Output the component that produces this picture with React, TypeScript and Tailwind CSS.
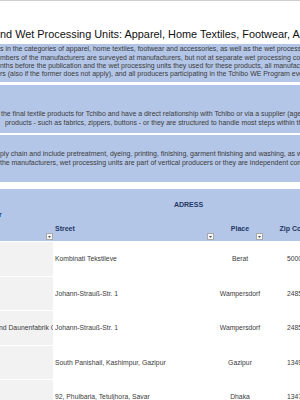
import React from 'react'

function FilterButton({ className }: { className: string }) {
  return (
    <span className={`absolute flex h-[7px] w-[7px] items-center justify-center border border-[#a9a9a9] bg-[#f4f4f4] ${className}`}>
      <svg width="3" height="2" viewBox="0 0 3 2">
        <path d="M0 0h3L1.5 2z" fill="#555" />
      </svg>
    </span>
  )
}

const intro = [
  's in the categories of apparel, home textiles, footwear and accessories, as well as the wet processing units',
  'mbers of the manufacturers are surveyed at manufacturers, but not at separate wet processing companies',
  'nths before the publication and the wet processing units they used for these products, all manufacturers',
  'rs (also if the former does not apply), and all producers participating in the Tchibo WE Program even',
]

const rows = [
  { name: '', street: 'Kombinati Tekstileve', place: 'Berat', zip: '5000' },
  { name: '', street: 'Johann-Strauß-Str. 1', place: 'Wampersdorf', zip: '2485' },
  { name: 'nd Daunenfabrik GmbH', street: 'Johann-Strauß-Str. 1', place: 'Wampersdorf', zip: '2485' },
  { name: '', street: 'South Panishail, Kashimpur, Gazipur', place: 'Gazipur', zip: '1349' },
  { name: '', street: '92, Phulbaria, Tetuljhora, Savar', place: 'Dhaka', zip: '1347' },
]

export default function App() {
  return (
    <div className="h-[400px] w-[300px] overflow-hidden bg-white font-['Liberation_Sans',Arial,sans-serif] text-[#3b3b3b]">
      <div className="h-px bg-[#cfcfcf]" />

      <div className="h-[43px] overflow-hidden whitespace-nowrap pt-[27.3px] text-[10.9px] leading-[12px] text-[#111]">
        nd Wet Processing Units: Apparel, Home Textiles, Footwear, Accessories
      </div>

      <div className="h-[38px] overflow-hidden whitespace-nowrap bg-[#b4c6e7] pt-[1.2px] text-[6.95px] leading-[8.33px]">
        {intro.map((line) => (
          <div key={line}>{line}</div>
        ))}
      </div>

      <div className="h-[3px]" />

      <div className="h-[48px] overflow-hidden whitespace-nowrap bg-[#b4c6e7] pt-[25.2px] text-[6.95px] leading-[8.33px]">
        <div className="pl-[1px]">the final textile products for Tchibo and have a direct relationship with Tchibo or via a supplier (agent</div>
        <div className="pl-[5px]">products - such as fabrics, zippers, buttons - or they are structured to handle most steps within their</div>
      </div>

      <div className="h-[2px]" />

      <div className="h-[47px] overflow-hidden whitespace-nowrap bg-[#b4c6e7] pt-[15.2px] text-[6.95px] leading-[8.33px]">
        <div>ply chain and include pretreatment, dyeing, printing, finishing, garment finishing and washing, as well as</div>
        <div>the manufacturers, wet processing units are part of vertical producers or they are independent companies</div>
      </div>

      <div className="h-[7px]" />

      <div className="flex h-[52px] bg-[#b4c6e7] text-[7px] font-bold leading-[8px] text-[#1f3864]">
        <div className="relative w-[53px] shrink-0 overflow-hidden">
          <div className="-ml-[1px] pt-[22px]">r</div>
          <FilterButton className="bottom-[1px] right-0" />
        </div>
        <div className="flex w-[271px] shrink-0 flex-col">
          <div className="flex h-[31px] items-center justify-center pt-[1px]">ADRESS</div>
          <div className="flex h-[21px]">
            <div className="relative w-[162px] shrink-0 pl-[2px] pt-[5px]">
              Street
              <FilterButton className="bottom-[1px] right-[1px]" />
            </div>
            <div className="relative w-[50px] shrink-0 pt-[5px] text-center">
              Place
              <FilterButton className="bottom-[1px] right-[2px]" />
            </div>
            <div className="w-[59px] shrink-0 pt-[5px] text-center">Zip Code</div>
          </div>
        </div>
      </div>

      <div className="h-px" />

      {rows.map((r, i) => (
        <div key={i} className="flex h-[34.5px] text-[6.8px] leading-[8px]">
          <div className="flex w-[53px] shrink-0 items-center overflow-hidden whitespace-nowrap border-b border-white bg-[#f2f2f2]">
            <span className="-ml-[1px]">{r.name}</span>
          </div>
          <div className="flex w-[162px] shrink-0 items-center overflow-hidden whitespace-nowrap pl-[2px]">{r.street}</div>
          <div className="flex w-[50px] shrink-0 items-center justify-center">{r.place}</div>
          <div className="flex w-[59px] shrink-0 items-center justify-center">{r.zip}</div>
        </div>
      ))}
    </div>
  )
}
